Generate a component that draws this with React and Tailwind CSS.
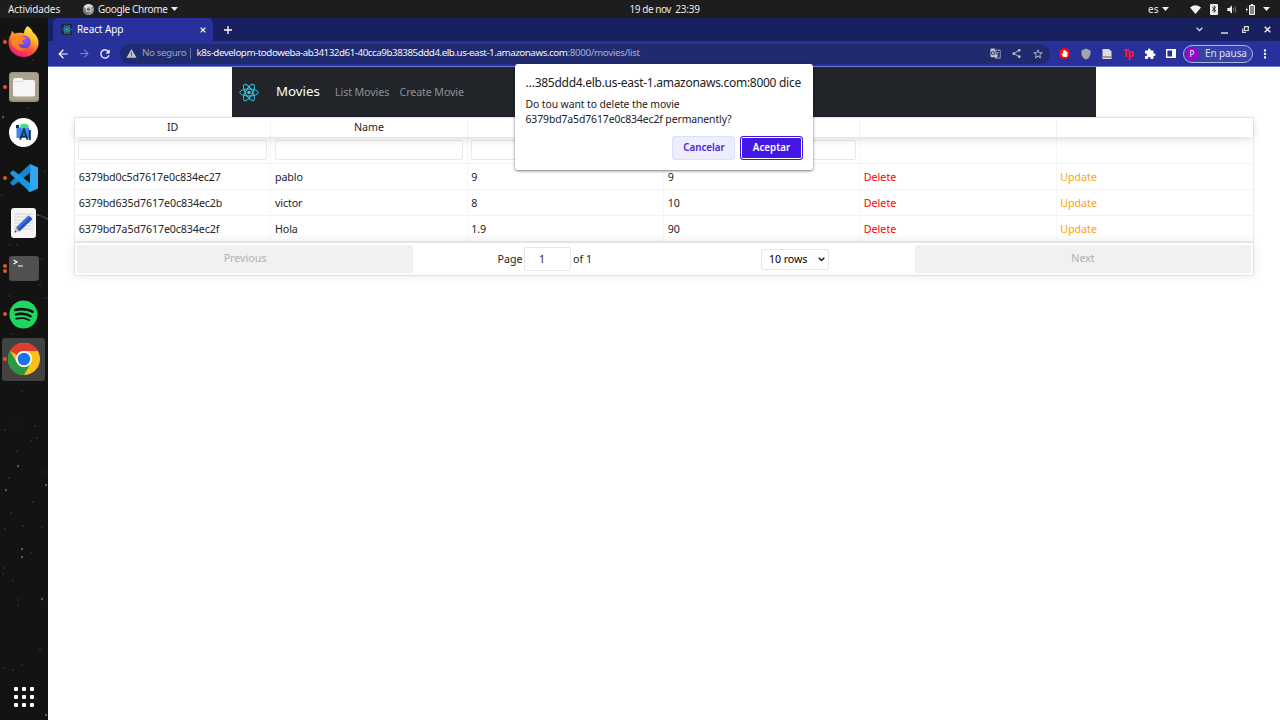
import React from "react";
import { FaBluetoothB, FaSpotify, FaHandPaper } from "react-icons/fa";
import { MdShare, MdStarBorder, MdGTranslate, MdMoreVert, MdArrowBack, MdArrowForward, MdRefresh, MdWarning, MdShield, MdExtension } from "react-icons/md";

const Caret = () => (
  <svg className="h-[4px] w-[7px] shrink-0" viewBox="0 0 7 4"><path d="M0 0h7L3.5 4z" fill="#eee" /></svg>
);

const ReactLogo = ({ className }) => (
  <svg className={className} viewBox="0 0 40 36" fill="none" stroke="#35c9e8" strokeWidth="2">
    <ellipse cx="20" cy="18" rx="18.5" ry="7" />
    <ellipse cx="20" cy="18" rx="18.5" ry="7" transform="rotate(60 20 18)" />
    <ellipse cx="20" cy="18" rx="18.5" ry="7" transform="rotate(120 20 18)" />
    <circle cx="20" cy="18" r="3.6" fill="#35c9e8" stroke="none" />
  </svg>
);

const Firefox = () => (
  <svg className="h-[31px] w-[31px]" viewBox="0 0 31 31">
    <defs>
      <linearGradient id="ffBody" x1=".8" y1="0" x2=".3" y2="1">
        <stop offset="0" stopColor="#fff44f" /><stop offset=".35" stopColor="#ffb526" /><stop offset=".65" stopColor="#ff5634" /><stop offset="1" stopColor="#ef1585" />
      </linearGradient>
      <radialGradient id="ffGlobe" cx=".6" cy=".3" r=".8"><stop offset="0" stopColor="#9059ff" /><stop offset="1" stopColor="#5b3bc4" /></radialGradient>
      <linearGradient id="ffFox" x1="0" y1="0" x2="1" y2="1"><stop offset="0" stopColor="#ff9a1f" /><stop offset="1" stopColor="#ff6a2a" /></linearGradient>
    </defs>
    <path d="M19.5 0c3 2 4.600 4 5.300 6.200 3.200 2.300 5.800 6 5.800 10.500C30.600 24.600 24 31 15.700 31 7.300 31 .6 24.700.6 16.500c0-3.700 1.200-6.500 2.500-8.200L4 5l2.300 2.800c2.300-1.200 4.900-1.500 7.500-.8l2 .4C16.200 4.500 17.400 2 19.500 0z" fill="url(#ffBody)" />
    <circle cx="15.800" cy="16.300" r="6.800" fill="url(#ffGlobe)" />
    <path d="M4 5l2.600 3c2-.8 4.300-.8 6.200.2l2.200 2.500 3.500.6c-.4 1.700-2.700 2.300-4 3-.5 2 .8 3 2.500 3.200-2.500 1.800-5 1-6.500-.3.400 3.500 4 6 8.500 4.800-4 4-11.500 3-14.500-2.500C2.500 15.500 3 10 4 5z" fill="url(#ffFox)" />
  </svg>
);

const Files = () => (
  <svg className="h-[30px] w-[30px]" viewBox="0 0 30 30">
    <rect width="30" height="30" rx="3.500" fill="#9a917f" /><rect x="1" y="1" width="28" height="27" rx="3" fill="#aaa18f" />
    <path d="M4 8q0-2 2-2h7l1.500 2H24q2 0 2 2v12.500q0 2-2 2H6q-2 0-2-2z" fill="#f6f5f3" /><path d="M4.500 9.500h9l1-1.500" fill="none" stroke="#d5d0c8" strokeWidth=".8" />
  </svg>
);

const AndroidStudio = () => (
  <svg className="h-[29px] w-[29px]" viewBox="0 0 29 29">
    <circle cx="14.500" cy="14.500" r="14.500" fill="#fff" />
    <path d="M7.500 9.500h12.500v10.500h-12.500z" fill="#3f86ee" />
    <path d="M7 7h3v3H7z" fill="#0a3550" />
    <path d="M11 9.700a4.300 3.600 0 0 1 8.600 0zM11.500 5.800l1.300 2M19 5.800l-1.300 2" fill="#3ddc84" stroke="#3ddc84" strokeWidth=".6" />
    <path d="M11 21.700l4-10 3.500 10M12.500 18.300h5" fill="none" stroke="#0a3550" strokeWidth="1.800" />
    <path d="M20.800 12v10" stroke="#0a3550" strokeWidth="2" />
  </svg>
);

const VSCode = () => (
  <svg className="h-[28px] w-[28px]" viewBox="0 0 28 28">
    <path d="M20 0l8 3.500v21L20 28z" fill="#2fa8f0" />
    <path d="M20 0L1 17.500 0 19l2.500 2.500L4 21.300 20.500 8.500z" fill="#1585cf" />
    <path d="M20 28L1 10.500 0 9l2.500-2.500L4 6.700 20.500 19.500z" fill="#1a95de" />
    <path d="M20 0v28l-2-1 2-7V8z" fill="#249fe8" />
  </svg>
);

const Editor = () => (
  <svg className="h-[30px] w-[25px]" viewBox="0 0 25 30">
    <rect width="25" height="30" rx="3" fill="#f5f5f5" />
    <path d="M3 6h19M3 9h19M3 12h19M3 15h19M3 18h19M3 21h19" stroke="#c9c9c9" strokeWidth=".8" />
    <path d="M3.500 24.500l1.500-5 3.500 3.800z" fill="#e3b991" /><path d="M3.500 24.500l.6-2 1.300 1.500z" fill="#222" />
    <path d="M5 19.500L17.500 7.200l3.800 3.800L8.500 23.300z" fill="#3b6fe0" /><path d="M6.800 21.300L19.500 9l1.800 2L8.500 23.300z" fill="#2553bd" />
  </svg>
);

const Terminal = () => (
  <svg className="h-[25px] w-[30px]" viewBox="0 0 30 25">
    <rect width="30" height="25" rx="3" fill="#4d4d4d" /><rect x=".5" y=".5" width="29" height="23.500" rx="3" fill="#515151" />
    <path d="M4.500 4l3.500 2-3.500 2M9 10h5" fill="none" stroke="#fff" strokeWidth="1.200" />
  </svg>
);

const Chrome = ({ className, mono }) => (
  <svg className={className} viewBox="0 0 32 32">
    <circle cx="16" cy="16" r="16" fill={mono ? "#999" : "#fbc116"} />
    <path d="M2.140 8A16 16 0 0 1 29.860 8H16a8 8 0 0 0-7 4z" fill={mono ? "#ddd" : "#e33b2e"} />
    <path d="M2.140 8A16 16 0 0 0 16 32l6.930-12A8 8 0 0 1 9.070 20z" fill={mono ? "#777" : "#269a48"} />
    <circle cx="16" cy="16" r="8" fill="#fff" /><circle cx="16" cy="16" r="6.300" fill={mono ? "#777" : "#1a73e8"} />
  </svg>
);

const stars = [[22,391],[16,424],[35,426],[5,430],[31,441],[37,438],[17,451],[18,466,1],[43,472],[46,485,1],[9,478],[6,490,1],[33,502],[11,513],[23,526],[42,527],[5,529],[22,549,1],[22,557,1],[31,553],[4,568],[3,574],[13,581],[42,599,1],[18,600],[18,606],[22,665],[13,670],[4,668],[40,649],[36,699],[46,715,1],[4,40],[33,60],[28,108],[3,117,1],[45,171],[2,195],[10,245],[17,245],[38,215,1],[42,259],[9,296],[46,298],[12,334],[40,285]];

const DockItem = ({ dots = 0, active, children }) => (
  <div className="flex h-[45.400px] w-full items-center pl-[2px]">
    <div className={"relative flex h-[43px] w-[43px] items-center justify-center rounded-[3px] " + (active ? "bg-[#424242]" : "")}>
      <div className="absolute top-0 left-0 flex h-full w-[5px] flex-col items-center justify-center gap-[1px]">
        {Array.from({ length: dots }, (_, i) => <i key={i} className="h-[4px] w-[4px] rounded-full bg-[#e95420]" />)}
      </div>
      {children}
    </div>
  </div>
);

const Dock = () => (
  <aside className="relative flex w-[48px] shrink-0 flex-col overflow-hidden bg-[#131313]">
    <svg className="absolute top-0 left-0 h-[702px] w-[48px]" viewBox="0 18 48 702">
      {stars.map(([x, y, b], i) => <circle key={i} cx={x} cy={y} r={b ? 1.2 : 0.9} fill={b ? "#5a5a5a" : "#303030"} />)}
      <path d="M34 213l14 5v2z" fill="#444" />
    </svg>
    <div className="relative flex grow flex-col pt-[1px]">
      <DockItem dots={1}><Firefox /></DockItem>
      <DockItem dots={1}><Files /></DockItem>
      <DockItem><AndroidStudio /></DockItem>
      <DockItem dots={1}><VSCode /></DockItem>
      <DockItem><Editor /></DockItem>
      <DockItem dots={2}><Terminal /></DockItem>
      <DockItem dots={1}><div className="rounded-full bg-[#111]"><FaSpotify className="h-[29px] w-[29px] text-[#1ed760]" /></div></DockItem>
      <DockItem dots={1} active><Chrome className="h-[32px] w-[32px]" /></DockItem>
      <div className="mt-auto mb-[13px] ml-[14px] grid w-[20px] grid-cols-3 gap-[4px]">
        {Array.from({ length: 9 }, (_, i) => <i key={i} className="h-[4px] w-[4px] rounded-[1px] bg-white" />)}
      </div>
    </div>
  </aside>
);

const TopBar = () => (
  <header className="flex h-[18px] shrink-0 items-center bg-[#1d1d1d] text-[10px] text-[#eaeaea]">
    <div className="w-[83px] pl-[8px] tracking-[-0.120px]">Actividades</div>
    <Chrome mono className="h-[11px] w-[11px]" />
    <span className="ml-[4px] w-[73px] whitespace-nowrap tracking-[-0.330px]">Google Chrome</span>
    <Caret />
    <div className="ml-[451.500px] w-[518.500px] whitespace-pre tracking-[-0.450px]">19 de nov  <span className="tracking-[-0.200px]">23:39</span></div>
    <span className="w-[14px]">es</span>
    <Caret />
    <div className="ml-auto flex items-center pr-[10px]">
      <svg className="mr-[9px] h-[9px] w-[11px]" viewBox="0 0 11 9"><path d="M0 2.500Q5.500-1.800 11 2.500L5.500 9z" fill="#f2f2f2" /></svg>
      <span className="mr-[9px] flex h-[11px] w-[8px] items-center justify-center rounded-[1px] bg-[#eee]"><FaBluetoothB className="h-[8px] w-[8px] text-[#222]" /></span>
      <svg className="mr-[8px] h-[9px] w-[10px]" viewBox="0 0 10 9"><path d="M.3 3h2L5 .3v8.400L2.300 6h-2z" fill="#f2f2f2" /><path d="M6.300 3q1 1.500 0 3M7.800 1.500q2 3 0 6" fill="none" stroke="#888" strokeWidth=".9" /></svg>
      <svg className="mr-[8px] h-[11px] w-[10px]" viewBox="0 0 10 11"><path d="M2.500 3L.5 6h1.300L1 9l2-4H1.900z" fill="#eee" /><path d="M4.500 1.500h5v9h-5z" fill="#888" stroke="#eee" /><path d="M6 0h2v1.500H6z" fill="#eee" /></svg>
      <Caret />
    </div>
  </header>
);

const TabStrip = () => (
  <div className="flex h-[23px] shrink-0 items-end bg-[#182060] pl-[5px] text-white">
    <div className="flex h-[23px] w-[160px] items-center rounded-t-[5px] bg-[#28309b] pl-[8px]">
      <span className="flex h-[11px] w-[11px] items-center justify-center rounded-[1px] bg-[#20242b]"><ReactLogo className="h-[9px] w-[10px]" /></span>
      <span className="ml-[5px] w-[122.500px] text-[10px] tracking-[-0.100px]">React App</span>
      <svg className="h-[6px] w-[6px]" viewBox="0 0 6 6"><path d="M.6.6l4.800 4.800M5.400.6L.6 5.400" stroke="#fff" strokeWidth="1.200" /></svg>
    </div>
    <div className="flex h-full grow items-center pl-[11px]">
      <svg className="h-[8px] w-[8px]" viewBox="0 0 8 8"><path d="M4 0v8M0 4h8" stroke="#fff" strokeWidth="1.300" /></svg>
      <div className="ml-auto flex items-center pr-[9px]">
        <svg className="mr-[18px] h-[5px] w-[7px]" viewBox="0 0 7 5"><path d="M.6.800l2.900 2.900L6.400.800" fill="none" stroke="#ddd" strokeWidth="1.300" /></svg>
        <svg className="mr-[14px] h-[8px] w-[7px]" viewBox="0 0 7 8"><path d="M0 7h7" stroke="#ddd" strokeWidth="1.500" /></svg>
        <svg className="mr-[15px] h-[7px] w-[7px]" viewBox="0 0 7 7"><path d="M2.500.700h3.800v3.800H2.500zM4 6.300H.700V2.500" fill="none" stroke="#ddd" strokeWidth="1.200" /></svg>
        <svg className="h-[7px] w-[7px]" viewBox="0 0 7 7"><path d="M.700.700l5.600 5.600M6.300.700L.700 6.300" stroke="#eee" strokeWidth="1.400" /></svg>
      </div>
    </div>
  </div>
);

const Toolbar = () => (
  <div className="flex h-[26px] shrink-0 items-center border-b border-[#6f7fd0] bg-[#28309b] pl-[8px] text-white">
    <MdArrowBack className="h-[14px] w-[14px]" />
    <MdArrowForward className="ml-[8px] h-[13px] w-[13px] text-[#7b80c2]" />
    <MdRefresh className="ml-[7px] h-[14px] w-[14px]" />
    <div className="ml-[8px] flex h-[20px] w-[930px] items-center rounded-full bg-[#1f2b6e] pr-[6px] pl-[6px] text-[9.800px]">
      <MdWarning className="h-[11px] w-[11px] text-[#c0c2c6]" />
      <span className="ml-[5px] w-[48px] whitespace-nowrap tracking-[-0.420px] text-[#9ca2bf]">No seguro</span>
      <span className="h-[11px] w-px bg-[#656d9c]" />
      <span className="ml-[5.500px] whitespace-nowrap tracking-[-0.465px] text-[#f2f3fa]">k8s-developm-todoweba-ab34132d61-40cca9b38385ddd4.elb.us-east-1.amazonaws.com<span className="tracking-[-0.350px] text-[#a9b0d2]">:8000/movies/list</span></span>
      <div className="ml-auto flex items-center gap-[10px] text-[#bfc2c9]">
        <MdGTranslate className="h-[11px] w-[11px]" /><MdShare className="h-[11px] w-[11px]" /><MdStarBorder className="h-[12px] w-[12px]" />
      </div>
    </div>
    <div className="ml-[9px] flex items-center">
      <span className="flex h-[11px] w-[11px] items-center justify-center rounded-full bg-[#f50808]"><FaHandPaper className="h-[7px] w-[7px]" /></span>
      <MdShield className="ml-[10px] h-[12px] w-[12px] text-[#a3a5a6]" />
      <svg className="ml-[10px] h-[10px] w-[10px]" viewBox="0 0 10 10"><path d="M.500 0H7l2.500 2.500V10h-9z" fill="#ddd" /><path d="M1 7h8v2H1z" fill="#999" /></svg>
      <span className="ml-[11px] w-[11px] pb-[2px] text-[10px] leading-none font-extrabold tracking-[-0.800px] text-[#ff173f]">Tp</span>
      <MdExtension className="ml-[10px] h-[12px] w-[12px]" />
      <svg className="ml-[10px] h-[9px] w-[10px]" viewBox="0 0 10 9"><path d="M.700.700h8.600v7.600H.700z" fill="none" stroke="#fff" strokeWidth="1.400" /><path d="M6 1h3v7H6z" fill="#fff" /></svg>
      <div className="ml-[7px] flex h-[18px] w-[70px] items-center rounded-full border border-[#a9b4e6] bg-[#3642a4] pl-[1px] text-[10px]">
        <span className="flex h-[14px] w-[14px] items-center justify-center rounded-full bg-[#9508c7] text-[8px]">P</span>
        <span className="ml-[6px] whitespace-nowrap tracking-[-0.100px] text-[#dce0f7]">En pausa</span>
      </div>
      <MdMoreVert className="ml-[5px] h-[14px] w-[14px]" />
    </div>
  </div>
);

const rows = [
  ["6379bd0c5d7617e0c834ec27", "pablo", "9", "9"],
  ["6379bd635d7617e0c834ec2b", "victor", "8", "10"],
  ["6379bd7a5d7617e0c834ec2f", "Hola", "1.9", "90"],
];
const headers = ["ID", "Name", "", "", "", ""];

const MoviesTable = () => (
  <section className="mt-[-1px] ml-[26px] w-[1180px] border border-[#ececec] text-[10.670px] leading-[16px] text-[#212529]">
    <div className="relative grid h-[19px] grid-cols-6 shadow-[0_2px_8px_rgba(0,0,0,0.15)]">
      {headers.map((h, i) => <div key={i} className="border-r border-[#f2f2f2] pt-px text-center last:border-r-0">{h}</div>)}
    </div>
    <div className="grid h-[27px] grid-cols-6 border-b border-[#f2f2f2]">
      {headers.map((_, i) => (
        <div key={i} className="border-r border-[#f7f7f7] px-[3.400px] pt-[3px] last:border-r-0">
          {i < 4 && <div className="h-[20px] rounded-[2px] border border-[#e9e9e9] bg-white" />}
        </div>
      ))}
    </div>
    {rows.map((r) => (
      <div key={r[0]} className="grid h-[26px] grid-cols-6 border-b border-[#f2f2f2] last:border-b-0">
        {r.map((c, i) => <div key={i} className="border-r border-[#f7f7f7] pt-[4.500px] pl-[3.700px] tracking-[-0.100px]">{c}</div>)}
        <div className="border-r border-[#f7f7f7] pt-[4.500px] pl-[3.500px] text-[#ff0000]">Delete</div>
        <div className="pt-[4.500px] pl-[3.500px] text-[#ffa500]">Update</div>
      </div>
    ))}
    <div className="relative flex h-[33px] items-center border-t border-[#e2e2e2] bg-white px-[2px] shadow-[0_0_10px_rgba(0,0,0,0.1)]">
      <div className="h-[28px] w-[336px] rounded-[2px] bg-[#f1f1f1] pt-[5px] text-center text-[#b0b0b0]">Previous</div>
      <div className="flex grow items-center">
        <span className="ml-[84.500px] w-[26.500px]">Page</span>
        <span className="flex h-[24px] w-[47px] items-center rounded-[2px] border border-[#e6e6e6] pl-[14px]">1</span>
        <span className="ml-[2px]">of 1</span>
        <div className="ml-auto mr-[86px] flex h-[21px] w-[68px] items-center justify-between rounded-[2px] border border-[#e6e6e6] pr-[3px] pl-[7px] text-black">
          <span className="whitespace-nowrap tracking-[-0.100px]">10 rows</span>
          <svg className="h-[5px] w-[7px]" viewBox="0 0 7 5"><path d="M.700.800l2.800 2.800L6.300.800" fill="none" stroke="#111" strokeWidth="1.400" /></svg>
        </div>
      </div>
      <div className="h-[28px] w-[336px] rounded-[2px] bg-[#f1f1f1] pt-[5px] text-center text-[#b0b0b0]">Next</div>
    </div>
  </section>
);

const ConfirmDialog = () => (
  <div role="dialog" className="absolute top-[64px] left-[515px] z-10 h-[106px] w-[298px] rounded-[3px] bg-white pr-[10px] pl-[10.500px] pt-[10px] text-[#202124] shadow-[0_1px_3px_rgba(0,0,0,0.55)]">
    <h1 className="text-[12px] leading-[18px] whitespace-nowrap tracking-[-0.285px]">…385ddd4.elb.us-east-1.amazonaws.com:8000 dice</h1>
    <p className="mt-[5px] text-[10.400px] leading-[15px] tracking-[-0.090px]">Do tou want to delete the movie<br />6379bd7a5d7617e0c834ec2f permanently?</p>
    <div className="mt-[9px] flex justify-end gap-[5px] text-[9.800px] font-semibold">
      <button className="h-[24px] w-[63px] rounded-[3px] border border-[#dcdffa] bg-[#eceefe] pt-px pl-px text-[#4a22e0]">Cancelar</button>
      <button className="h-[24px] w-[63px] rounded-[3px] border border-[#4318dc] bg-[#4318e5] pt-px text-white inset-ring inset-ring-white">Aceptar</button>
    </div>
  </div>
);

export default function App() {
  return (
    <div className="relative flex h-[720px] w-[1280px] flex-col overflow-hidden bg-white font-['Noto_Sans','Open_Sans',sans-serif]">
      <TopBar />
      <div className="flex min-h-0 grow">
        <Dock />
        <main className="flex min-w-0 grow flex-col">
          <TabStrip />
          <Toolbar />
          <div className="grow">
            <nav className="mx-auto flex h-[51px] w-[864px] items-center bg-[#212529] pb-px pl-[7px] text-[10.670px] text-[#909294]">
              <ReactLogo className="h-[19px] w-[20px]" />
              <span className="ml-[17px] w-[59px] text-[13.300px] text-white">Movies</span>
              <span className="w-[64.500px] whitespace-nowrap tracking-[-0.100px]">List Movies</span>
              <span className="whitespace-nowrap tracking-[-0.100px]">Create Movie</span>
            </nav>
            <MoviesTable />
          </div>
        </main>
      </div>
      <ConfirmDialog />
    </div>
  );
}
